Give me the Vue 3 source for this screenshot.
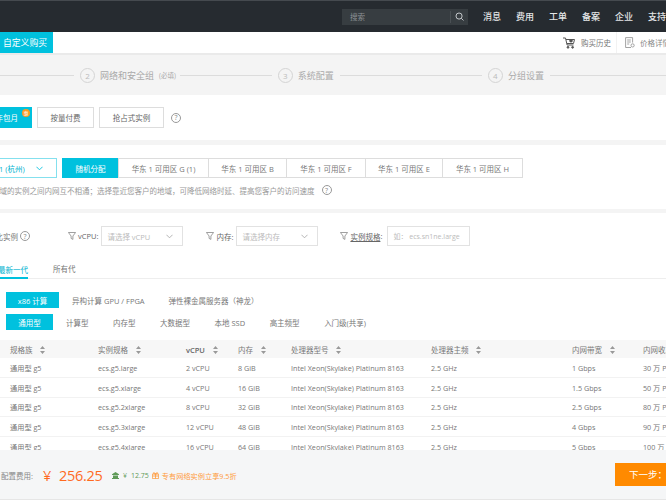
<script setup>
const navItems = ['消息', '费用', '工单', '备案', '企业', '支持']
const zones = [
  { label: '华东 1 可用区 G (1)', width: 91 },
  { label: '华东 1 可用区 B', width: 79 },
  { label: '华东 1 可用区 F', width: 80 },
  { label: '华东 1 可用区 E', width: 78 },
  { label: '华东 1 可用区 H', width: 81 },
]
const families = ['计算型', '内存型', '大数据型', '本地 SSD', '高主频型', '入门级(共享)']
const columns = [
  { label: '规格族', width: 88 },
  { label: '实例规格', width: 88 },
  { label: 'vCPU', width: 52, strong: true },
  { label: '内存', width: 53 },
  { label: '处理器型号', width: 140 },
  { label: '处理器主频', width: 141 },
  { label: '内网带宽', width: 71 },
  { label: '内网收发包', width: 100 },
]
const rows = [
  ['ecs.g5.large', '2 vCPU', '8 GiB', '1 Gbps', '30 万 PPS'],
  ['ecs.g5.xlarge', '4 vCPU', '16 GiB', '1.5 Gbps', '50 万 PPS'],
  ['ecs.g5.2xlarge', '8 vCPU', '32 GiB', '2.5 Gbps', '80 万 PPS'],
  ['ecs.g5.3xlarge', '12 vCPU', '48 GiB', '4 Gbps', '90 万 PPS'],
  ['ecs.g5.4xlarge', '16 vCPU', '64 GiB', '5 Gbps', '100 万 PPS'],
]
</script>

<template>
  <div class="viewport">
    <div class="page">
      <!-- 顶部导航 -->
      <header class="topbar">
        <div class="search">
          <span class="search-text">搜索</span>
          <span class="search-btn">
            <svg width="9" height="9" viewBox="0 0 10 10" fill="none" stroke="#c4c8cb" stroke-width="1.1">
              <circle cx="4.5" cy="4.5" r="3.4" />
              <path d="M7 7l2.4 2.4" />
            </svg>
          </span>
        </div>
        <nav class="nav">
          <span v-for="item in navItems" :key="item">{{ item }}</span>
        </nav>
      </header>

      <div class="subbar">
        <span class="sub-tab">自定义购买</span>
        <div class="sub-links">
          <span class="sub-link history">
            <svg width="13" height="12" viewBox="0 0 13 12" fill="none" stroke="#555" stroke-width="1">
              <path d="M0 1h2.500l1.600 7h6.400" />
              <path d="M3 2.500h8.500l-1 4H4" />
              <circle cx="5" cy="10.300" r=".9" fill="#555" />
              <circle cx="9.600" cy="10.300" r=".9" fill="#555" />
              <circle cx="8" cy="3.800" r="1.800" fill="#555" stroke="none" />
            </svg>
            购买历史
          </span>
          <span class="sub-link">
            <svg width="10" height="11" viewBox="0 0 10 11" fill="none" stroke="#999" stroke-width=".9">
              <path d="M6 10.500H.6V.6h7v5" />
              <path d="M2.200 3h3.600M2.200 5h3.600M2.200 7h2" />
              <circle cx="7.600" cy="8.400" r="1.600" />
            </svg>
            价格详情
          </span>
        </div>
      </div>

      <!-- 步骤条 -->
      <div class="steps">
        <span class="step-line" style="width: 114px"></span>
        <span class="step-num">2</span>
        <span class="step-name">网络和安全组</span>
        <span class="step-note">(必填)</span>
        <span class="step-line" style="width: 92px"></span>
        <span class="step-num">3</span>
        <span class="step-name">系统配置</span>
        <span class="step-line" style="width: 142px"></span>
        <span class="step-num">4</span>
        <span class="step-name">分组设置</span>
        <span class="step-line" style="width: 200px"></span>
      </div>

      <!-- 付费方式 -->
      <section class="billing">
        <span class="pay-btn active">
          包年包月
          <i class="pay-badge">惠</i>
        </span>
        <span class="pay-btn">按量付费</span>
        <span class="pay-btn wide">抢占式实例</span>
        <span class="help big">?</span>
      </section>

      <!-- 地域 -->
      <section class="region">
        <div class="zone-row">
          <span class="region-select">
            华东 1 (杭州)
            <svg class="chevron" width="7" height="5" viewBox="0 0 8 5" fill="none" stroke="#00c1de" stroke-width="1">
              <path d="M.5.5L4 4 7.500.5" />
            </svg>
          </span>
          <span class="zone active">随机分配</span>
          <span v-for="zone in zones" :key="zone.label" class="zone" :style="{ width: zone.width + 'px' }">{{ zone.label }}</span>
        </div>
        <p class="hint">
          不同地域的实例之间内网互不相通；选择靠近您客户的地域，可降低网络时延、提高您客户的访问速度
          <span class="help">?</span>
        </p>
      </section>

      <!-- 实例筛选 -->
      <section class="instances">
        <div class="filters">
          <span class="filter-title">对比实例</span>
          <span class="help">?</span>
          <span class="filter vcpu">
            <svg class="funnel" width="8" height="8" viewBox="0 0 8 8" fill="none" stroke="#888" stroke-width=".8">
              <path d="M.4.5h7.200L4.900 4v3.400L3.100 6.400V4z" />
            </svg>
            <label>vCPU:</label>
            <span class="select">
              请选择 vCPU
              <svg width="7" height="5" viewBox="0 0 8 5" fill="none" stroke="#aaa" stroke-width="1">
                <path d="M.5.5L4 4 7.500.5" />
              </svg>
            </span>
          </span>
          <span class="filter memory">
            <svg class="funnel" width="8" height="8" viewBox="0 0 8 8" fill="none" stroke="#888" stroke-width=".8">
              <path d="M.4.5h7.200L4.900 4v3.400L3.100 6.400V4z" />
            </svg>
            <label>内存:</label>
            <span class="select">
              请选择内存
              <svg width="7" height="5" viewBox="0 0 8 5" fill="none" stroke="#aaa" stroke-width="1">
                <path d="M.5.5L4 4 7.500.5" />
              </svg>
            </span>
          </span>
          <span class="filter spec">
            <svg class="funnel" width="8" height="8" viewBox="0 0 8 8" fill="none" stroke="#888" stroke-width=".8">
              <path d="M.4.5h7.200L4.900 4v3.400L3.100 6.400V4z" />
            </svg>
            <label class="link-label">实例规格</label><label>:</label>
            <span class="select text-input">如： ecs.sn1ne.large</span>
          </span>
        </div>

        <div class="tabs">
          <span class="tab active">最新一代</span>
          <span class="tab">所有代</span>
        </div>

        <div class="cat-row">
          <span class="cat active first">x86 计算</span>
          <span class="cat gpu">异构计算 GPU / FPGA</span>
          <span class="cat metal">弹性裸金属服务器（神龙）</span>
        </div>
        <div class="family-row">
          <span class="family active">通用型</span>
          <span v-for="family in families" :key="family" class="family">{{ family }}</span>
        </div>

        <div class="table-wrap">
          <table class="spec-table">
            <colgroup>
              <col v-for="col in columns" :key="col.label" :style="{ width: col.width + 'px' }">
            </colgroup>
            <thead>
              <tr>
                <th v-for="col in columns" :key="col.label" :class="{ strong: col.strong }">
                  {{ col.label }}
                  <svg class="sort" width="5" height="8" viewBox="0 0 5 8" fill="#999">
                    <path d="M2.500 0L5 3H0zM2.500 8L0 5h5z" />
                  </svg>
                </th>
              </tr>
            </thead>
            <tbody>
              <tr v-for="row in rows" :key="row[0]">
                <td>通用型 g5</td>
                <td>{{ row[0] }}</td>
                <td>{{ row[1] }}</td>
                <td>{{ row[2] }}</td>
                <td>Intel Xeon(Skylake) Platinum 8163</td>
                <td>2.5 GHz</td>
                <td>{{ row[3] }}</td>
                <td>{{ row[4] }}</td>
              </tr>
            </tbody>
          </table>
        </div>
      </section>

      <!-- 底部费用 -->
      <footer class="footer">
        <span class="fee-label">配置费用:</span>
        <span class="fee-price"><i>¥</i>256.25</span>
        <span class="fee-save">
          <svg width="7" height="7" viewBox="0 0 7 7" fill="#5f9a58">
            <path d="M3.500 0L7 2.200V3H0v-.8zM1 3.500h5V6h1v1H0V6h1z" />
          </svg>
          <i>¥</i>
          12.75
        </span>
        <span class="fee-promo">
          <svg width="7" height="7" viewBox="0 0 7 7" fill="none" stroke="#ff9a3c" stroke-width=".8">
            <path d="M.4 2h6.200v4.600H.4zM3.500 2v4.600M.4 4h6.200M3.500 2C2.500.2 1 .4 1.400 1.400 1.600 2 3.500 2 3.500 2zM3.500 2c1-1.800 2.500-1.600 2.100-.6C5.400 2 3.500 2 3.500 2z" />
          </svg>
          专有网络实例立享9.5折
        </span>
        <span class="next-btn">下一步：网络和安全组</span>
      </footer>
    </div>
  </div>
</template>

<style>
html,
body {
  margin: 0;
  background: #fff;
}
</style>

<style scoped>
.viewport {
  width: 666px;
  height: 500px;
  overflow: hidden;
}

/* 页面被横向滚动了 40px，左边内容被裁掉 */
.page {
  width: 960px;
  height: 500px;
  margin-left: -40px;
  display: flex;
  flex-direction: column;
  font-family: "Open Sans", "Noto Sans CJK SC", sans-serif;
  font-size: 7.5px;
  color: #777;
}

.topbar {
  height: 31px;
  flex: none;
  border-top: 1px solid #454a4f;
  background: #262b30;
  display: flex;
  align-items: center;
}

.search {
  width: 126px;
  height: 16px;
  margin-left: 382px;
  background: #373d41;
  display: flex;
  align-items: center;
  justify-content: space-between;
  font-size: 7.5px;
  color: #8c9195;
}

.search-text {
  margin-left: 8px;
}

.search-btn {
  width: 17px;
  height: 12px;
  border-left: 1px solid #4a5054;
  display: flex;
  align-items: center;
  justify-content: center;
}

.nav {
  margin-left: 15px;
  display: flex;
  gap: 15px;
  font-size: 9px;
  font-weight: 500;
  color: #e4e6e7;
  white-space: nowrap;
}

.subbar {
  height: 21px;
  flex: none;
  background: #fff;
  border-bottom: 2px solid #eaeaea;
  display: flex;
  align-items: stretch;
}

.sub-tab {
  margin-left: 30px;
  width: 63px;
  background: #00c1de;
  color: #fff;
  font-size: 8.8px;
  padding-left: 13px;
  box-sizing: border-box;
  display: flex;
  align-items: center;
}

.sub-links {
  margin-left: 510px;
  display: flex;
  align-items: center;
  font-size: 7.5px;
  color: #888;
  white-space: nowrap;
}

.sub-link {
  display: flex;
  align-items: center;
  gap: 5px;
  height: 21px;
  padding-left: 8px;
}

.history {
  width: 53px;
  padding-left: 0;
  border-right: 1px solid #f2f2f2;
  color: #777;
}

.steps {
  height: 40px;
  flex: none;
  background: #f4f4f4;
  display: flex;
  align-items: center;
  color: #aaa;
  font-size: 9px;
  white-space: nowrap;
}

.step-line {
  height: 1px;
  background: #dcdcdc;
}

.step-num {
  width: 15px;
  height: 15px;
  margin: 0 5px 0 6px;
  border: 1px solid #d4d4d4;
  border-radius: 50%;
  box-sizing: border-box;
  display: flex;
  align-items: center;
  justify-content: center;
  font-size: 8px;
  color: #bbb;
}

.step-name {
  margin-right: 6px;
}

.step-note {
  margin-right: 4px;
  margin-left: -1px;
  font-size: 6.5px;
}

.billing {
  height: 45px;
  flex: none;
  border-bottom: 5px solid #f4f4f4;
  display: flex;
  align-items: center;
  gap: 5px;
  background: #fff;
}

.pay-btn {
  position: relative;
  width: 57px;
  height: 21px;
  border: 1px solid #ddd;
  box-sizing: border-box;
  display: flex;
  align-items: center;
  justify-content: center;
  color: #666;
  white-space: nowrap;
}

.pay-btn.active {
  width: 52px;
  margin-left: 20px;
  padding-right: 6px;
  background: #00c1de;
  border-color: #00c1de;
  color: #fff;
}

.pay-btn.wide {
  width: 65px;
}

.pay-badge {
  position: absolute;
  top: 1px;
  right: 1px;
  width: 8px;
  height: 8px;
  border-radius: 50%;
  background: #ff9a1e;
  color: #fff;
  font-size: 5px;
  font-style: normal;
  line-height: 8px;
  text-align: center;
}

.help {
  display: inline-flex;
  width: 10px;
  height: 10px;
  border: 1px solid #999;
  border-radius: 50%;
  box-sizing: border-box;
  align-items: center;
  justify-content: center;
  font-size: 7px;
  color: #888;
  line-height: 1;
}

.help.big {
  margin-left: 2px;
}

.region {
  height: 64px;
  flex: none;
  border-bottom: 4.500px solid #f4f4f4;
  background: #fff;
}

.zone-row {
  display: flex;
  height: 20px;
  padding-top: 13px;
}

.region-select {
  width: 97px;
  height: 20px;
  border: 1px solid #84e0ee;
  box-sizing: border-box;
  display: flex;
  align-items: center;
  justify-content: space-between;
  padding: 0 13px 0 21px;
  color: #00b3cf;
  white-space: nowrap;
}

.zone {
  height: 20px;
  margin-left: -1px;
  border: 1px solid #ddd;
  box-sizing: border-box;
  display: flex;
  align-items: center;
  justify-content: center;
  color: #777;
  white-space: nowrap;
}

.zone.active {
  width: 57px;
  margin-left: 5px;
  background: #00c1de;
  border-color: #00c1de;
  color: #fff;
}

.hint {
  margin: 5px 0 0 0;
  padding-left: 17px;
  height: 14px;
  display: flex;
  align-items: center;
  gap: 7px;
  color: #999;
  white-space: nowrap;
}

.instances {
  flex: 1;
  min-height: 0;
  display: flex;
  flex-direction: column;
  background: #fff;
}

.filters {
  height: 20px;
  margin-top: 13px;
  flex: none;
  display: flex;
  align-items: center;
  white-space: nowrap;
}

.filter-title {
  margin-right: 2px;
  margin-left: 28px;
  color: #777;
}

.filter {
  display: flex;
  align-items: center;
  color: #666;
}

.funnel {
  margin-right: 2px;
}

.vcpu {
  margin-left: 38px;
}

.memory {
  margin-left: 23px;
}

.spec {
  margin-left: 22px;
}

.link-label {
  text-decoration: underline;
}

.select {
  width: 82px;
  height: 20px;
  margin-left: 3px;
  border: 1px solid #e2e2e2;
  box-sizing: border-box;
  display: flex;
  align-items: center;
  justify-content: space-between;
  padding: 0 9px 0 5px;
  color: #bbb;
}

.text-input {
  width: 83px;
  margin-left: 5px;
  font-size: 7px;
}

.tabs {
  height: 33px;
  flex: none;
  border-bottom: 1px solid #eee;
  display: flex;
  align-items: flex-end;
  gap: 25px;
  box-sizing: border-box;
  color: #777;
}

.tab {
  height: 18px;
  line-height: 18px;
  box-sizing: border-box;
}

.tab.active {
  margin-left: 38px;
  color: #00b3cf;
  border-bottom: 2px solid #00c1de;
  margin-bottom: -1px;
}

.cat-row,
.family-row {
  display: flex;
  flex: none;
  align-items: center;
  color: #777;
  white-space: nowrap;
}

.cat-row {
  height: 16px;
  margin-top: 13px;
}

.family-row {
  height: 16px;
  margin-top: 6px;
}

.cat.active,
.family.active {
  background: #00c1de;
  color: #fff;
  height: 16px;
  display: flex;
  align-items: center;
  justify-content: center;
  box-sizing: border-box;
}

.cat.first {
  width: 53px;
  margin-left: 46px;
}

.gpu {
  margin-left: 13px;
}

.metal {
  margin-left: 24px;
}

.family {
  margin-right: 24.500px;
}

.family.active {
  width: 47px;
  margin-left: 46px;
  margin-right: 13px;
}

.table-wrap {
  margin: 10px 0 0 40px;
  flex: 1;
  min-height: 0;
  overflow: hidden;
}

.spec-table {
  width: 733px;
  table-layout: fixed;
  border-collapse: collapse;
  color: #777;
  font-size: 7.2px;
}

.spec-table th {
  height: 18px;
  padding: 1px 0 0 10px;
  box-sizing: border-box;
  background: #f7f7f7;
  font-weight: 400;
  text-align: left;
  white-space: nowrap;
  color: #777;
  font-size: 7.5px;
}

.spec-table th.strong {
  font-weight: 600;
  color: #666;
}

.sort {
  margin-left: 6px;
  vertical-align: -1px;
}

.spec-table td {
  height: 19.600px;
  padding: 1px 0 0 10px;
  box-sizing: border-box;
  border-bottom: 1px solid #f2f2f2;
  white-space: nowrap;
}

.footer {
  height: 50px;
  flex: none;
  padding-top: 2px;
  background: #f5f6f7;
  border-bottom: 1px solid #e6e6e6;
  box-sizing: border-box;
  display: flex;
  align-items: center;
  white-space: nowrap;
}

.fee-label {
  margin-left: 41px;
  color: #888;
}

.fee-price {
  margin-left: 10px;
  width: 69px;
  font-size: 14.500px;
  letter-spacing: -0.3px;
  color: #ff6a1f;
}

.fee-price i {
  font-style: normal;
  display: inline-block;
  width: 16px;
}

.fee-save {
  display: flex;
  align-items: center;
  gap: 4px;
  color: #5f9a58;
  font-size: 7px;
}

.fee-save i {
  font-style: normal;
}

.fee-promo {
  margin-left: 3px;
  display: flex;
  align-items: center;
  gap: 3px;
  color: #ff9a3c;
  font-size: 7.2px;
}

.next-btn {
  width: 110px;
  height: 23px;
  margin: -3px 195px 0 auto;
  background: #ff8a00;
  color: #fff;
  font-size: 9.500px;
  display: flex;
  align-items: center;
  padding-left: 14px;
  box-sizing: border-box;
}
</style>
